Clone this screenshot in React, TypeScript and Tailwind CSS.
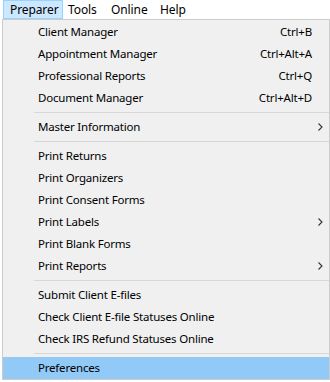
type Item = { label: string; shortcut?: string; sub?: boolean; active?: boolean };

const groups: Item[][] = [
  [
    { label: "Client Manager", shortcut: "Ctrl+B" },
    { label: "Appointment Manager", shortcut: "Ctrl+Alt+A" },
    { label: "Professional Reports", shortcut: "Ctrl+Q" },
    { label: "Document Manager", shortcut: "Ctrl+Alt+D" },
  ],
  [{ label: "Master Information", sub: true }],
  [
    { label: "Print Returns" },
    { label: "Print Organizers" },
    { label: "Print Consent Forms" },
    { label: "Print Labels", sub: true },
    { label: "Print Blank Forms" },
    { label: "Print Reports", sub: true },
  ],
  [
    { label: "Submit Client E-files" },
    { label: "Check Client E-file Statuses Online" },
    { label: "Check IRS Refund Statuses Online" },
  ],
  [{ label: "Preferences", active: true }],
];

function Chevron() {
  return (
    <svg width="5" height="8" viewBox="0 0 5 8" className="block">
      <path d="M0.5 0.5 L4 4 L0.5 7.5" fill="none" stroke="#333333" strokeWidth="1.1" />
    </svg>
  );
}

function MenuRow({ item }: { item: Item }) {
  return (
    <div
      className={`flex items-center h-[22px] pl-[35px] ${
        item.active ? "bg-[#91c9f7]" : ""
      }`}
    >
      <span className="flex-1 whitespace-nowrap">{item.label}</span>
      {item.shortcut && <span className="whitespace-nowrap">{item.shortcut}</span>}
      <span className="w-[17px] flex justify-end pr-[6px]">
        {item.sub && <Chevron />}
      </span>
    </div>
  );
}

export default function App() {
  return (
    <div
      className="w-[330px] h-[382px] bg-white text-black text-[11.5px] tracking-[-0.2px] overflow-hidden"
      style={{ fontFamily: '"Noto Sans", "Open Sans", sans-serif' }}
    >
      {/* menu bar */}
      <div className="flex h-[19px] items-stretch pl-[3px] text-[12px] tracking-[-0.1px]">
        <div className="w-[60px] pl-[6px] bg-[#cce8ff] border border-[#99d1ff] flex items-center leading-none">
          Preparer
        </div>
        <div className="w-[41px] pl-[5px] flex items-center leading-none">Tools</div>
        <div className="w-[49px] pl-[7px] flex items-center leading-none">Online</div>
        <div className="pl-[7px] flex items-center leading-none">Help</div>
      </div>

      {/* dropdown */}
      <div className="ml-[2px] w-[328px] bg-[#f0f0f0] border border-[#cccccc] pt-px">
        {groups.map((g, gi) => (
          <div key={gi}>
            {gi > 0 && (
              <div className="h-[7px] pt-[3px] pl-[31px]">
                <div className="h-px bg-[#d7d7d7]" />
              </div>
            )}
            {g.map((it) => (
              <MenuRow key={it.label} item={it} />
            ))}
          </div>
        ))}
      </div>
    </div>
  );
}
